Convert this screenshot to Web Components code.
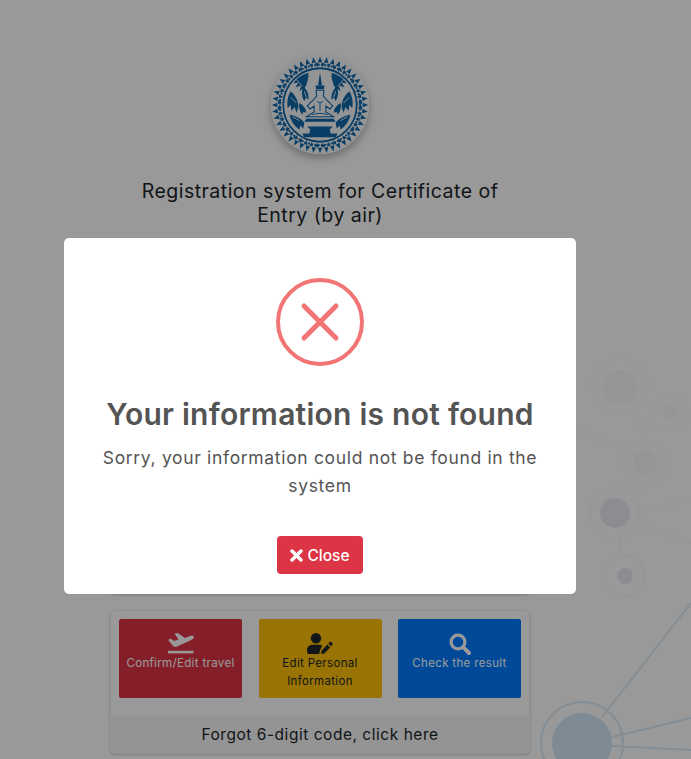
<!DOCTYPE html>
<html>
<head>
<meta charset="utf-8">
<title>Registration system</title>
<style>
  html, body { margin: 0; height: 759px; overflow: hidden; background: #fff; }
  body { font-family: "Inter", "Open Sans", sans-serif; }
</style>
</head>
<body>
<reg-page>
  <net-backdrop slot="backdrop"></net-backdrop>
  <reg-seal></reg-seal>
  <reg-title>Registration system for Certificate of Entry (by air)</reg-title>
  <search-card></search-card>
  <menu-card>
    <menu-tile color="#dc3545" ink="#fff" label="Confirm/Edit travel" icon="plane"></menu-tile>
    <menu-tile color="#ffc107" ink="#212529" label="Edit Personal Information" icon="user"></menu-tile>
    <menu-tile color="#007bff" ink="#fff" label="Check the result" icon="search"></menu-tile>
    <span slot="footer">Forgot 6-digit code, click here</span>
  </menu-card>
  <alert-dialog slot="dialog" heading="Your information is not found">
    Sorry, your information could not be found in the system
  </alert-dialog>
</reg-page>

<script>
// Page frame: 640px column, then the dimming layer and the dialog on top.
class RegPage extends HTMLElement {
  constructor() {
    super();
    this.attachShadow({ mode: "open" }).innerHTML = `
      <style>
        :host { display: block; position: relative; width: 691px; height: 759px; overflow: hidden; }
        .column { width: 640px; display: flex; flex-direction: column; align-items: center; position: relative; }
        .dim { position: absolute; inset: 0; background: rgba(0,0,0,.4); }
      </style>
      <slot name="backdrop"></slot>
      <div class="column"><slot></slot></div>
      <div class="dim"></div>
      <slot name="dialog"></slot>`;
  }
}

// Decorative network of nodes on the right of the page.
class NetBackdrop extends HTMLElement {
  constructor() {
    super();
    this.attachShadow({ mode: "open" }).innerHTML = `
      <style>:host { position: absolute; inset: 0; display: block; }</style>
      <svg width="691" height="759" viewBox="0 0 691 759" fill="none">
        <g stroke="#fbfcfd" fill="none">
          <circle cx="620" cy="387" r="28"/>
          <circle cx="670" cy="413" r="18"/>
          <circle cx="645" cy="463" r="22"/>
          <path d="M636 410 645 442M645 484 628 503M580 430 625 452"/>
        </g>
        <g fill="#f8f9fb">
          <circle cx="620" cy="387" r="17"/>
          <circle cx="670" cy="413" r="7"/>
          <circle cx="645" cy="463" r="12"/>
        </g>
        <g stroke="#f6f8fa" fill="none">
          <circle cx="615" cy="513" r="25"/>
          <circle cx="625" cy="576" r="20" stroke-width="1.5"/>
          <path d="M618 530 622 557M640 525 691 543M640 510 691 500" stroke-width="1.2"/>
        </g>
        <circle cx="615" cy="513" r="15" fill="#e8ecf1"/>
        <circle cx="625" cy="576" r="8" fill="#e8ecf1"/>
        <circle cx="582" cy="743" r="41" stroke="#dcebf6" stroke-width="2"/>
        <circle cx="582" cy="743" r="30" fill="#d2e8f8"/>
        <path d="M602 717 691 603M612 737 691 718M612 746 691 750" stroke="#dcebf6" stroke-width="2"/>
      </svg>`;
  }
}

// Round blue-on-white seal, drawn from rings and rays since no image is available.
class RegSeal extends HTMLElement {
  constructor() {
    super();
    let rays = "";
    for (let i = 0; i < 44; i++) {
      const a = i * 360 / 44;
      rays += `<path d="M50 .8 52.300 6.500H47.700Z" transform="rotate(${a} 50 50)"/>`;
      rays += `<path d="M50 11.600 51.800 7H48.200Z" transform="rotate(${a + 4.100} 50 50)"/>`;
    }
    // flourishes either side of the figure, mirrored
    const side = [
      "M38 17c-6 2-12 5-15 11l5-1-3 5 6-2-2 6 6-4c2-5 4-10 3-15Z",
      "M20 36c-3 5-4 11-3 17l3-3 1 6 3-4 2 6 2-6c0-6-3-12-8-16Z",
      "M19 60c1 6 5 12 10 15l1-4 3 3 1-6c-3-4-9-7-15-8Z",
      "M33 31c-2 5-2 10 1 15l2-4 2 3c1-5-1-11-5-14Z",
      "M29 48c-1 4 0 9 3 12l1-3 3 1c0-4-3-8-7-10Z"
    ].map((d) => `<path d="${d}"/>`).join("");
    const curls = `<g>${side}</g><g transform="matrix(-1 0 0 1 100 0)">${side}</g>`;
    this.attachShadow({ mode: "open" }).innerHTML = `
      <style>
        :host { display: block; width: 98px; height: 98px; margin-top: 56px; border-radius: 50%;
                box-shadow: 0 4px 9px rgba(0,0,0,.3); }
        svg { display: block; }
      </style>
      <svg width="98" height="98" viewBox="0 0 100 100">
        <circle cx="50" cy="50" r="50" fill="#f6f7f8"/>
        <g fill="#0e66a8">${rays}</g>
        <circle cx="50" cy="50" r="37.500" fill="none" stroke="#0e66a8" stroke-width="1.800"/>
        <circle cx="50" cy="50" r="41" fill="none" stroke="#0e66a8" stroke-width="2" stroke-dasharray="2.200 1.200"/>
        <g fill="#0e66a8">${curls}</g>
        <g fill="none" stroke="#f6f7f8" stroke-width=".9">
          <path d="M26 24l6 7M20 42l6 6M74 24l-6 7M80 42l-6 6M22 62l7 4M78 62l-7 4M34 36l2 6M66 36l-2 6"/>
        </g>
        <g fill="#0e66a8">
          <path d="M50 17 52 30H48Z"/>
          <path d="M45.500 30H54.500L54 34H46Z"/>
          <path d="M36 64H64L66 67H34Z"/>
          <path d="M37 72H63L60 75 61 80H39L40 75Z"/>
          <path d="M32 79H68L66 83H34Z"/>
        </g>
        <g fill="#f6f7f8" stroke="#0e66a8" stroke-width="1.100">
          <path d="M46 35H54L53.500 41 56 44 63 51 60 54 56 51 56 57 64 62H36L44 57 44 51 40 54 37 51 44 44 46.500 41Z"/>
        </g>
        <g fill="none" stroke="#0e66a8" stroke-width=".9">
          <path d="M47 46c2 2 4 2 6 0M50 48v8M42 60c5-2 11-2 16 0M44 75h12"/>
        </g>
      </svg>`;
  }
}

class RegTitle extends HTMLElement {
  constructor() {
    super();
    this.attachShadow({ mode: "open" }).innerHTML = `
      <style>
        :host { display: block; width: 400px; margin-top: 25px; text-align: center;
                font: 400 19.500px/24px "Inter", sans-serif; letter-spacing: .48px; color: #212529; }
      </style>
      <slot></slot>`;
  }
}

// The form card that sits under the dialog; only its shadow peeks out below.
class SearchCard extends HTMLElement {
  constructor() {
    super();
    this.attachShadow({ mode: "open" }).innerHTML = `
      <style>
        :host { display: block; box-sizing: border-box; width: 420px; height: 347px; margin-top: 20px;
                background: #fff; border-radius: 5px; box-shadow: 0 1px 3px rgba(0,0,0,.2); }
      </style>`;
  }
}

class MenuCard extends HTMLElement {
  constructor() {
    super();
    this.attachShadow({ mode: "open" }).innerHTML = `
      <style>
        :host { display: block; box-sizing: border-box; width: 420px; height: 144px; margin-top: 16px;
                background: #fff; border: 1px solid #f4f4f4; border-radius: 5px; overflow: hidden;
                box-shadow: 0 1px 3px rgba(0,0,0,.2); }
        .tiles { height: 105px; box-sizing: border-box; padding: 8px 8px 0; display: grid;
                 grid-template-columns: repeat(3, 123px); justify-content: space-between; }
        .foot { height: 37px; display: flex; align-items: center; justify-content: center;
                background: #f7f7f7; font: 400 15.500px "Inter", sans-serif; letter-spacing: .53px; color: #212529; }
      </style>
      <div class="tiles"><slot></slot></div>
      <div class="foot"><slot name="footer"></slot></div>`;
  }
}

const TILE_ICONS = {
  plane: `<svg width="26" height="21" viewBox="0 0 26 21" fill="currentColor"><rect x="0" y="17.800" width="25.500" height="2.600"/><path d="M0 6.800 3 5.800 6 8 10.500 6.600 6.500 .8 9.800 0 17 5 21.500 3.300C23.500 2.600 25.300 2.700 25.800 3.800 26.300 5 25 6.200 23.300 7L9.500 13.300C8 14 6.500 14 5.300 13.200Z"/></svg>`,
  user: `<svg width="26" height="21" viewBox="0 0 26 21" fill="currentColor"><circle cx="9" cy="5.300" r="5.200"/><path d="M5.400 11.800h7.200c1 0 1.900.2 2.700.6l-2.500 5.300-.5 3.200H1.800C.8 20.900 0 20.100 0 19.100v-2c0-3 2.400-5.300 5.400-5.300Z"/><path d="M14.100 20.900l.5-3.300 5.800-6 2.800 2.800-5.900 6Zm7.200-10.300 1.500-1.500c.4-.4 1-.4 1.400 0l1.300 1.300c.4.4.4 1 0 1.400l-1.500 1.500Z"/></svg>`,
  search: `<svg width="22" height="22" viewBox="0 0 22 22" fill="none" stroke="currentColor"><circle cx="9" cy="9" r="6.900" stroke-width="3.200"/><path d="M14.200 14.200 20 20" stroke-width="3.900" stroke-linecap="round"/></svg>`
};

class MenuTile extends HTMLElement {
  connectedCallback() {
    const color = this.getAttribute("color");
    const ink = this.getAttribute("ink");
    this.attachShadow({ mode: "open" }).innerHTML = `
      <style>
        :host { display: flex; flex-direction: column; align-items: center; box-sizing: border-box;
                height: 79px; padding: 14px 4px 0; border-radius: 2px; text-align: center;
                background: ${color}; color: ${ink}; font: 400 11.500px/18px "Inter", sans-serif; letter-spacing: .34px; }
        .ico { height: 21px; }
        svg { display: block; }
      </style>
      <div class="ico">${TILE_ICONS[this.getAttribute("icon")]}</div>
      <span>${this.getAttribute("label")}</span>`;
  }
}

class AlertDialog extends HTMLElement {
  connectedCallback() {
    this.attachShadow({ mode: "open" }).innerHTML = `
      <style>
        :host { position: absolute; left: 64px; top: 238px; width: 512px; height: 356px; box-sizing: border-box;
                padding: 40px 16px 0; background: #fff; border-radius: 5px; display: flex; flex-direction: column;
                align-items: center; text-align: center; }
        svg { display: block; }
        h2 { margin: 30px 0 0; font: 600 30px/36px "Inter", sans-serif; letter-spacing: .25px; color: #545454; white-space: nowrap; }
        p { margin: 12px 0 0; width: 445px; font: 400 17.500px/28px "Inter", sans-serif; letter-spacing: .67px; color: #545454; }
        button { margin-top: 36px; width: 86px; height: 38px; border: 0; padding: 0; border-radius: 4px;
                 background: #dc3545; color: #fff; font: 500 15.500px "Inter", sans-serif;
                 display: flex; align-items: center; justify-content: center; gap: 4px; }
      </style>
      <svg width="88" height="88" viewBox="0 0 88 88" fill="none" stroke="#f27474">
        <circle cx="44" cy="44" r="42" stroke-width="4"/>
        <path d="M28 28 60 60M60 28 28 60" stroke-width="5" stroke-linecap="round"/>
      </svg>
      <h2>${this.getAttribute("heading")}</h2>
      <p><slot></slot></p>
      <button>
        <svg width="13" height="13" viewBox="0 0 13 13" stroke="#fff"><path d="M2 2 11 11M11 2 2 11" stroke-width="3.400" stroke-linecap="round"/></svg>
        Close
      </button>`;
  }
}

customElements.define("reg-page", RegPage);
customElements.define("net-backdrop", NetBackdrop);
customElements.define("reg-seal", RegSeal);
customElements.define("reg-title", RegTitle);
customElements.define("search-card", SearchCard);
customElements.define("menu-card", MenuCard);
customElements.define("menu-tile", MenuTile);
customElements.define("alert-dialog", AlertDialog);
</script>
</body>
</html>
